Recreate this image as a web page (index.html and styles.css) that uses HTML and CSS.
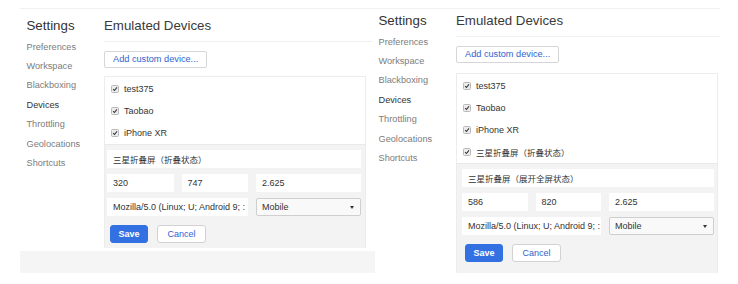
FILE: index.html
```html
<!DOCTYPE html>
<html lang="zh-CN">
<head>
    <meta charset="UTF-8" />
    <title>Emulated Devices</title>
    <link rel="stylesheet" href="styles.css">
</head>
<body>
<div class="board">

    <!-- first shot: folded state -->
    <section class="panel panel-a">
        <div class="settings">
            <nav class="side">
                <div class="side-title">Settings</div>
                <a class="side-link">Preferences</a>
                <a class="side-link">Workspace</a>
                <a class="side-link">Blackboxing</a>
                <a class="side-link active">Devices</a>
                <a class="side-link">Throttling</a>
                <a class="side-link">Geolocations</a>
                <a class="side-link">Shortcuts</a>
            </nav>
            <div class="main">
                <div class="main-title">Emulated Devices</div>
                <button class="btn-add">Add custom device...</button>
                <div class="devices">
                    <div class="device"><span class="check"><svg viewBox="0 0 8 8"><path d="M1.5 4.2 L3.3 6 L6.6 1.8" /></svg></span>test375</div>
                    <div class="device"><span class="check"><svg viewBox="0 0 8 8"><path d="M1.5 4.2 L3.3 6 L6.6 1.8" /></svg></span>Taobao</div>
                    <div class="device"><span class="check"><svg viewBox="0 0 8 8"><path d="M1.5 4.2 L3.3 6 L6.6 1.8" /></svg></span>iPhone XR</div>
                    <div class="edit">
                        <div class="field full cjk">三星折叠屏（折叠状态）</div>
                        <div class="field">320</div>
                        <div class="field">747</div>
                        <div class="field">2.625</div>
                        <div class="field wide">Mozilla/5.0 (Linux; U; Android 9; :</div>
                        <div class="select">Mobile<span class="caret"></span></div>
                        <div class="actions">
                            <button class="btn-save">Save</button>
                            <button class="btn-cancel">Cancel</button>
                        </div>
                    </div>
                </div>
            </div>
        </div>
        <div class="band"></div>
    </section>

    <!-- second shot: unfolded state -->
    <section class="panel panel-b">
        <div class="settings">
            <nav class="side">
                <div class="side-title">Settings</div>
                <a class="side-link">Preferences</a>
                <a class="side-link">Workspace</a>
                <a class="side-link">Blackboxing</a>
                <a class="side-link active">Devices</a>
                <a class="side-link">Throttling</a>
                <a class="side-link">Geolocations</a>
                <a class="side-link">Shortcuts</a>
            </nav>
            <div class="main">
                <div class="main-title">Emulated Devices</div>
                <button class="btn-add">Add custom device...</button>
                <div class="devices">
                    <div class="device"><span class="check"><svg viewBox="0 0 8 8"><path d="M1.5 4.2 L3.3 6 L6.6 1.8" /></svg></span>test375</div>
                    <div class="device"><span class="check"><svg viewBox="0 0 8 8"><path d="M1.5 4.2 L3.3 6 L6.6 1.8" /></svg></span>Taobao</div>
                    <div class="device"><span class="check"><svg viewBox="0 0 8 8"><path d="M1.5 4.2 L3.3 6 L6.6 1.8" /></svg></span>iPhone XR</div>
                    <div class="device cjk"><span class="check"><svg viewBox="0 0 8 8"><path d="M1.5 4.2 L3.3 6 L6.6 1.8" /></svg></span>三星折叠屏（折叠状态）</div>
                    <div class="edit">
                        <div class="field full cjk">三星折叠屏（展开全屏状态）</div>
                        <div class="field">586</div>
                        <div class="field">820</div>
                        <div class="field">2.625</div>
                        <div class="field wide">Mozilla/5.0 (Linux; U; Android 9; :</div>
                        <div class="select">Mobile<span class="caret"></span></div>
                        <div class="actions">
                            <button class="btn-save">Save</button>
                            <button class="btn-cancel">Cancel</button>
                        </div>
                    </div>
                </div>
            </div>
        </div>
    </section>

</div>
</body>
</html>
```

FILE: styles.css
```css
body {
    margin: 0;
    padding-top: 8px;
    font-family: "Liberation Sans", Arial, "Noto Sans CJK SC", sans-serif;
    background: #fff;
    color: #333;
}

.board {
    display: flex;
    margin-left: 20px;
    width: 700px;
    border-top: 1px solid #f1f1f1;
}

.panel {
    display: flex;
    flex-direction: column;
}

.panel-a {
    width: 352px;
    padding-top: 8.5px;
}

.panel-b {
    width: 348px;
    padding-top: 3.5px;
}

.settings {
    display: flex;
    flex: 1;
}

/* Sidebar */
.side {
    width: 84px;
    padding-left: 6.5px;
    box-sizing: border-box;
    display: flex;
    flex-direction: column;
}

.side-title {
    font-size: 13.3px;
    line-height: 16px;
    color: #333;
    margin-bottom: 4px;
}

.side-link {
    font-size: 9.2px;
    line-height: 19.4px;
    color: #7c7c7c;
    text-decoration: none;
}

.side-link.active {
    color: #333;
}

/* Main column */
.main {
    flex: 1;
    display: flex;
    flex-direction: column;
    align-items: flex-start;
}

.main-title {
    align-self: stretch;
    font-size: 13.3px;
    line-height: 16px;
    color: #3a3a3a;
    padding-bottom: 7.5px;
    border-bottom: 1px solid #f0f0f0;
}

.btn-add {
    margin-top: 8.7px;
    height: 17px;
    padding: 0 8px;
    font-family: inherit;
    font-size: 9.2px;
    color: #2f63cf;
    background: #fff;
    border: 1px solid #d6d6d6;
    border-radius: 2px;
}

.devices {
    align-self: stretch;
    margin-top: 8.3px;
    border: 1px solid #ececec;
    border-bottom: none;
    padding-top: 1px;
}

.panel-a .devices {
    margin-right: 6px;
}

.panel-b .devices {
    margin-top: 10px;
    margin-right: 2px;
}

.device {
    display: flex;
    align-items: center;
    height: 22px;
    padding-left: 6px;
    font-size: 9px;
    color: #333;
}

.device.cjk {
    font-size: 8.5px;
}

.check {
    width: 6px;
    height: 6px;
    margin-right: 5px;
    border: 1px solid #b9b9b9;
    border-radius: 1.5px;
    background: #ececec;
    display: flex;
}

.check svg {
    width: 6px;
    height: 6px;
    fill: none;
    stroke: #333;
    stroke-width: 1.4;
}

/* Edit form */
.edit {
    display: grid;
    grid-template-columns: 1fr 1fr 105px;
    column-gap: 8px;
    row-gap: 6px;
    padding: 5px 4px 5px 2px;
    background: #f3f3f3;
    border-top: 1px solid #e9e9e9;
}

.panel-b .edit {
    padding: 5px 3px 11px 5px;
}

.field {
    height: 18px;
    line-height: 18px;
    padding: 0 6px;
    background: #fff;
    font-size: 9px;
    color: #333;
    white-space: nowrap;
    overflow: hidden;
}

.field.full {
    grid-column: 1 / -1;
}

.field.wide {
    grid-column: span 2;
    padding-right: 2px;
}

.cjk {
    font-size: 8.5px;
    font-family: "Noto Sans CJK SC", "Liberation Sans", sans-serif;
}

.select {
    position: relative;
    height: 18px;
    line-height: 16px;
    padding: 0 5px;
    box-sizing: border-box;
    background: #f9f9f9;
    border: 1px solid #cfcfcf;
    border-radius: 2px;
    font-size: 9px;
    color: #333;
}

.caret {
    position: absolute;
    right: 6px;
    top: 7px;
    border-left: 2px solid transparent;
    border-right: 2px solid transparent;
    border-top: 3px solid #333;
}

.actions {
    grid-column: 1 / -1;
    display: flex;
    gap: 9px;
    margin-top: 3px;
    padding-left: 3px;
}

.btn-save,
.btn-cancel {
    height: 18px;
    font-family: inherit;
    font-size: 9px;
    border-radius: 3px;
}

.btn-save {
    width: 38px;
    color: #fff;
    font-weight: bold;
    background: #3370e2;
    border: 1px solid #3370e2;
}

.btn-cancel {
    width: 49px;
    color: #2f63cf;
    background: #fff;
    border: 1px solid #d2d2d2;
}

.band {
    height: 22px;
    margin-top: 2px;
    margin-right: -3px;
    background: #f5f5f5;
}
```
